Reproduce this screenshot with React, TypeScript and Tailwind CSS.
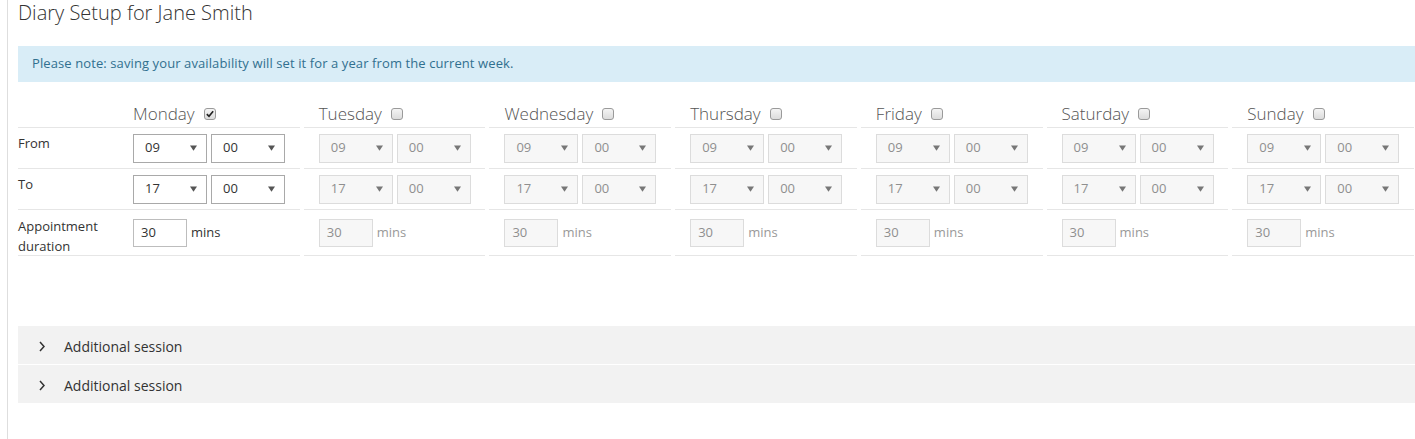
const days = ["Monday", "Tuesday", "Wednesday", "Thursday", "Friday", "Saturday", "Sunday"];

const font = { fontFamily: '"Open Sans", "Noto Sans", sans-serif' };

const Checkbox = ({ checked }: { checked: boolean }) => (
  <span className="inline-flex h-[12px] w-[12px] items-center justify-center rounded-[3px] border border-[#9a9a9a] bg-gradient-to-b from-[#f4f4f4] to-[#dcdcdc]">
    {checked && (
      <svg viewBox="0 0 12 12" className="h-[10px] w-[10px]">
        <path d="M2.2 6.2 L4.8 8.8 L9.8 2.8" fill="none" stroke="#222" strokeWidth="2" />
      </svg>
    )}
  </span>
);

const FakeSelect = ({ value, enabled }: { value: string; enabled: boolean }) => (
  <div
    className={
      "flex h-[29px] w-[74px] items-center justify-between pl-[11px] pr-[9px] text-[13px] " +
      (enabled ? "border border-[#a9a9a9] bg-white text-[#333]" : "border border-[#dcdcdc] bg-[#f7f7f7] text-[#8f8f8f]")
    }
  >
    <span>{value}</span>
    <svg viewBox="0 0 8 6" className="h-[6px] w-[7px]">
      <path d="M0 0 H8 L4 6 Z" fill={enabled ? "#555" : "#777"} />
    </svg>
  </div>
);

// table is a touch wider than the window, same as the original page
const gridCols = "grid w-[1400px] grid-cols-[100px_repeat(7,minmax(0,1fr))]";

const DayCell = ({ children, h }: { children?: React.ReactNode; h: string }) => (
  <div className="pr-[4px]">
    <div className={"flex items-center gap-[4px] border-b border-[#e6e6e6] pl-[15px] " + h}>{children}</div>
  </div>
);

export default function App() {
  return (
    <div className="min-h-[439px] overflow-hidden bg-white text-[#333]" style={font}>
      <div className="ml-[7px] min-h-[439px] border-l border-[#dedede] pl-[10px]">
        <h1 className="text-[20px] font-light leading-[26px] text-[#333]">Diary Setup for Jane Smith</h1>

        <div className="mt-[20px] flex h-[36px] items-center bg-[#d9edf7] pl-[14px] text-[13px] tracking-[0.1px] text-[#31708f]">
          Please note: saving your availability will set it for a year from the current week.
        </div>

        {/* Header row */}
        <div className={gridCols + " mt-[18px]"}>
          <div className="h-[28px] border-b border-[#e6e6e6]" />
          {days.map((d, i) => (
            <DayCell key={d} h="h-[28px]">
              <span className="mr-[5px] text-[17px] font-light leading-[27px] text-[#555]">{d}</span>
              <Checkbox checked={i === 0} />
            </DayCell>
          ))}
        </div>

        {/* From */}
        <div className={gridCols}>
          <div className="h-[41px] border-b border-[#e6e6e6] pt-[5px] text-[13px] leading-[20px]">From</div>
          {days.map((d, i) => (
            <DayCell key={d} h="h-[41px]">
              <FakeSelect value="09" enabled={i === 0} />
              <FakeSelect value="00" enabled={i === 0} />
            </DayCell>
          ))}
        </div>

        {/* To */}
        <div className={gridCols}>
          <div className="h-[41px] border-b border-[#e6e6e6] pt-[5px] text-[13px] leading-[20px]">To</div>
          {days.map((d, i) => (
            <DayCell key={d} h="h-[41px]">
              <FakeSelect value="17" enabled={i === 0} />
              <FakeSelect value="00" enabled={i === 0} />
            </DayCell>
          ))}
        </div>

        {/* Duration */}
        <div className={gridCols}>
          <div className="h-[46px] border-b border-[#e6e6e6] pt-[6px] text-[13px] leading-[20px]">
            Appointment
            <br />
            duration
          </div>
          {days.map((d, i) => (
            <DayCell key={d} h="h-[46px]">
              <div
                className={
                  "flex h-[28px] w-[54px] items-center pl-[7px] text-[13px] " +
                  (i === 0 ? "border border-[#bdbdbd] bg-white text-[#333]" : "border border-[#dcdcdc] bg-[#f7f7f7] text-[#8f8f8f]")
                }
              >
                30
              </div>
              <span className={"text-[13px] " + (i === 0 ? "text-[#333]" : "text-[#999]")}>mins</span>
            </DayCell>
          ))}
        </div>

        {/* Additional sessions */}
        <div className="mt-[70px] flex flex-col gap-[1px]">
          {[0, 1].map((k) => (
            <div key={k} className="flex h-[38px] items-center bg-[#f2f2f2] pl-[21px] pt-[3px] text-[14px] text-[#333]">
              <svg viewBox="0 0 6 11" className="h-[11px] w-[6px]">
                <path d="M1 1 L5 5.5 L1 10" fill="none" stroke="#333" strokeWidth="1.5" />
              </svg>
              <span className="ml-[19px]">Additional session</span>
            </div>
          ))}
        </div>
      </div>
    </div>
  );
}
